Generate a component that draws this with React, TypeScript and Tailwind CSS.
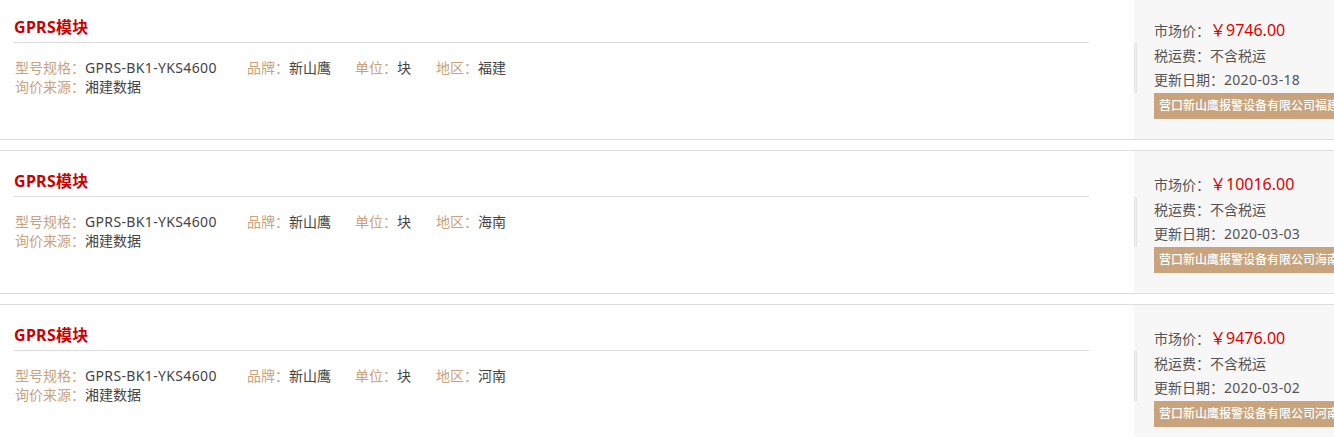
import React from "react";

type Item = { price: string; date: string; region: string };

const items: Item[] = [
  { price: "9746.00", date: "2020-03-18", region: "福建" },
  { price: "10016.00", date: "2020-03-03", region: "海南" },
  { price: "9476.00", date: "2020-03-02", region: "河南" },
];

const font = {
  fontFamily: '"Noto Sans", "Noto Sans CJK SC", sans-serif',
};

function Row({ item }: { item: Item }) {
  return (
    <div className="flex h-[144px] border-y border-[#dddddd] bg-white">
      <div className="w-[1134px] shrink-0 pl-[14px] pr-[45px]">
        <div className="border-b border-[#dddddd] pt-[20px] pb-[5px] text-[16px] font-bold leading-[20px] tracking-[0.3px] text-[#cc0000]">
          GPRS模块
        </div>
        <div className="mt-[15px] pl-[1px] text-[14px] leading-[19px]">
          <div className="flex">
            <div className="w-[232px]">
              <span className="text-[#c9a27e]">型号规格：</span>
              <span className="tracking-[0.35px] text-[#444]">GPRS-BK1-YKS4600</span>
            </div>
            <div className="w-[108px]">
              <span className="text-[#c9a27e]">品牌：</span>
              <span className="text-[#444]">新山鹰</span>
            </div>
            <div className="w-[81px]">
              <span className="text-[#c9a27e]">单位：</span>
              <span className="text-[#444]">块</span>
            </div>
            <div>
              <span className="text-[#c9a27e]">地区：</span>
              <span className="text-[#444]">{item.region}</span>
            </div>
          </div>
          <div>
            <span className="text-[#c9a27e]">询价来源：</span>
            <span className="text-[#444]">湘建数据</span>
          </div>
        </div>
      </div>
      <div className="flex min-w-0 flex-1 items-center overflow-hidden bg-[#f7f7f7]">
        <div className="h-[50px] w-[3px] shrink-0 rounded-[1px] border border-[#e4e4e4] bg-[#f0f0f0]" />
        <div className="ml-[17px] min-w-0 text-[14px] text-[#555]">
          <div className="whitespace-nowrap leading-[26px]">
            市场价：<span className="text-[16px] text-[#dd0000]">￥{item.price}</span>
          </div>
          <div className="whitespace-nowrap leading-[24px]">税运费：不含税运</div>
          <div className="whitespace-nowrap leading-[24px]">
            更新日期：<span className="tracking-[0.3px]">{item.date}</span>
          </div>
          <div className="mt-[1px] inline-block h-[26px] whitespace-nowrap bg-[#c8a37c] pl-[5px] pr-[8px] text-[12px] font-medium leading-[26px] text-white">
            营口新山鹰报警设备有限公司{item.region}分公司
          </div>
        </div>
      </div>
    </div>
  );
}

export default function App() {
  return (
    <div className="w-[1334px] h-[437px] overflow-hidden bg-white" style={font}>
      <div className="mt-[-4px] flex flex-col gap-[10px]">
        {items.map((it, i) => (
          <Row key={i} item={it} />
        ))}
      </div>
    </div>
  );
}
